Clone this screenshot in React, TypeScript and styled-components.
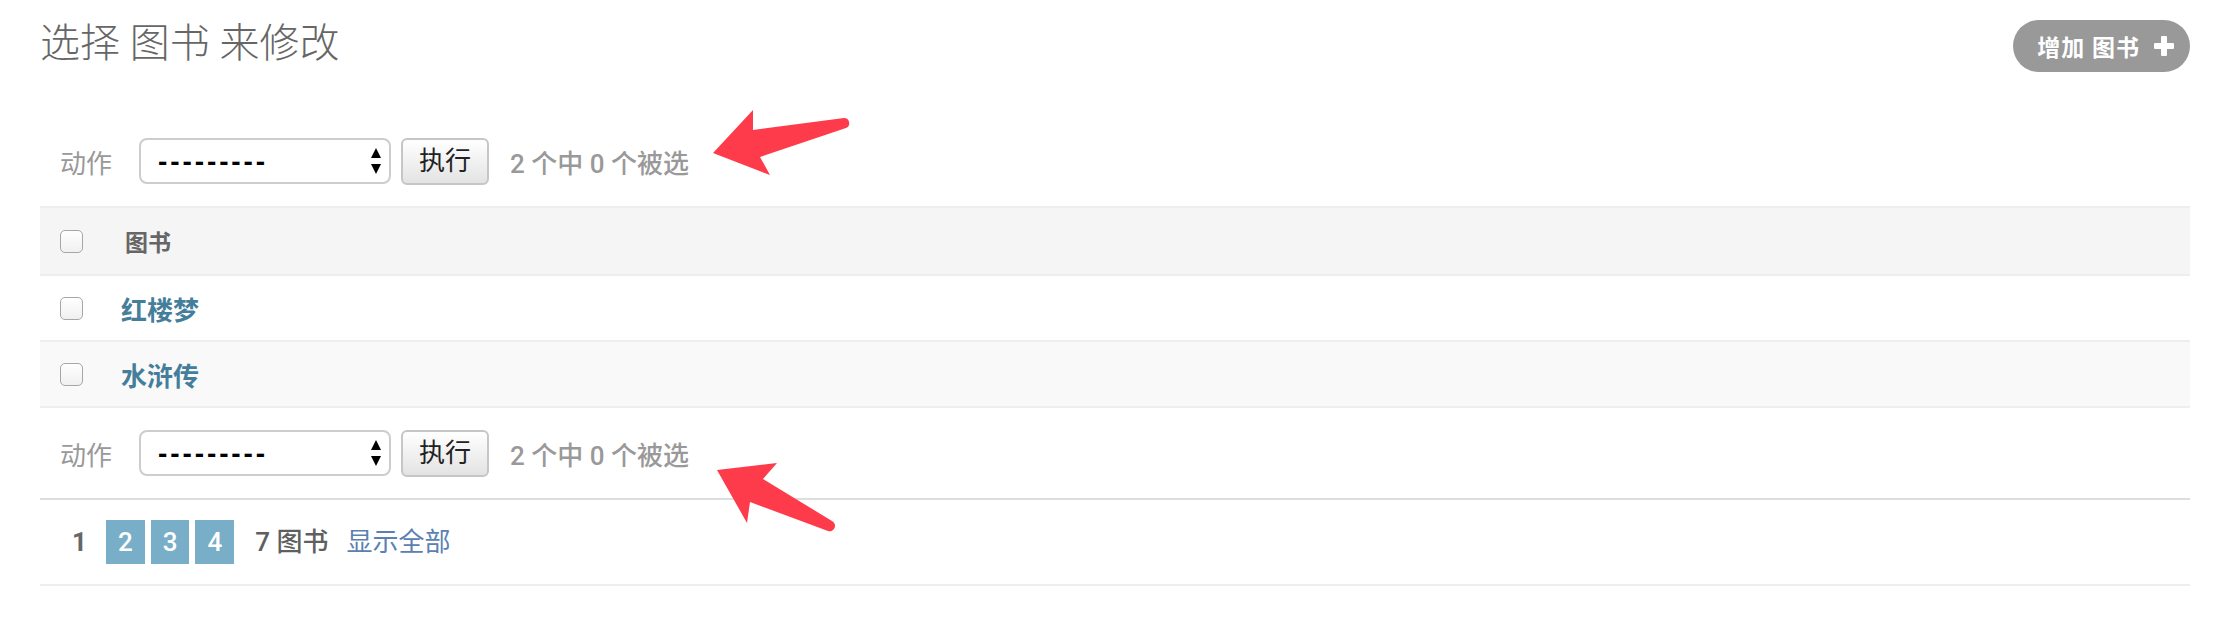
import React from "react";
import styled, { createGlobalStyle } from "styled-components";

const GlobalStyle = createGlobalStyle`
  html, body {
    margin: 0;
    padding: 0;
    background: #fff;
  }
  body {
    font-family: Roboto, "Noto Sans CJK SC", "DejaVu Sans", sans-serif;
  }
`;

const Page = styled.div`
  position: relative;
  width: 2236px;
  height: 620px;
  box-sizing: border-box;
  padding: 20px 46px 0 40px;
  overflow: hidden;
`;

const Header = styled.div`
  display: flex;
  justify-content: space-between;
  align-items: center;
  height: 52px;
  margin-bottom: 44px;
`;

const Title = styled.h1`
  margin: 0 0 4px;
  font-size: 40px;
  font-weight: 300;
  line-height: 48px;
  color: #666;
`;

const AddLink = styled.a`
  display: flex;
  align-items: center;
  gap: 14px;
  height: 52px;
  box-sizing: border-box;
  padding: 0 16px 0 24px;
  border-radius: 26px;
  background: #999;
  color: #fff;
  font-size: 23px;
  font-weight: 700;
  letter-spacing: 1px;
  text-decoration: none;
`;

const ActionBar = styled.div`
  display: flex;
  align-items: center;
  height: 90px;
  padding-left: 20px;
  font-size: 26px;
  color: #999;
`;

const ActionLabel = styled.span`
  color: #999;
`;

const SelectWrap = styled.div`
  position: relative;
  margin-left: 27px;
  width: 252px;
  height: 46px;
`;

const Select = styled.select`
  appearance: none;
  -webkit-appearance: none;
  width: 100%;
  height: 100%;
  box-sizing: border-box;
  margin: 0;
  padding: 0 0 0 17px;
  border: 2px solid #cdcdcd;
  border-radius: 8px;
  background: #fff;
  color: #000;
  font-family: "Liberation Sans", Arial, sans-serif;
  font-size: 28px;
  font-weight: 700;
  letter-spacing: 2.9px;
  outline: none;
`;

const SelectArrows = styled.svg`
  position: absolute;
  right: 10px;
  top: 10px;
  pointer-events: none;
`;

const GoButton = styled.button`
  margin-left: 10px;
  height: 47px;
  box-sizing: border-box;
  padding: 0 16px;
  border: 2px solid #c6c6c6;
  border-radius: 6px;
  background: linear-gradient(#ffffff, #e3e3e3);
  color: #222;
  font-family: inherit;
  font-size: 26px;
  line-height: 1;
`;

const Counter = styled.span`
  margin-left: 21px;
  color: #999;
  font-weight: 500;
`;

const HeadRow = styled.div`
  display: grid;
  grid-template-columns: 81px 1fr;
  align-items: center;
  height: 70px;
  box-sizing: border-box;
  border-top: 2px solid #eee;
  border-bottom: 2px solid #eee;
  background: #f5f5f5;
`;

const BodyRow = styled.div<{ $alt?: boolean }>`
  display: grid;
  grid-template-columns: 81px 1fr;
  align-items: center;
  height: 66px;
  box-sizing: border-box;
  border-bottom: 2px solid #eee;
  background: ${(p) => (p.$alt ? "#f9f9f9" : "#fff")};
`;

const CheckCell = styled.div`
  display: flex;
  align-items: center;
  padding-left: 20px;
`;

const Check = styled.input`
  appearance: none;
  -webkit-appearance: none;
  margin: 0;
  width: 23px;
  height: 23px;
  box-sizing: border-box;
  border: 1.5px solid #a6a6a6;
  border-radius: 5px;
  background: linear-gradient(#ffffff, #f0f0f0);
`;

const HeadLabel = styled.div`
  padding-left: 4px;
  font-size: 23px;
  font-weight: 700;
  color: #666;
`;

const RowLink = styled.a`
  font-size: 26px;
  font-weight: 700;
  color: #447e9b;
  text-decoration: none;
`;

const Paginator = styled.div`
  display: flex;
  align-items: center;
  padding: 20px 20px;
  border-top: 2px solid #ddd;
  border-bottom: 2px solid #eee;
  font-size: 26px;
  line-height: 44px;
  color: #666;
`;

const ThisPage = styled.span`
  padding: 0 12px;
  font-weight: 700;
  color: #666;
`;

const PageLink = styled.a<{ $gap: number; $end?: boolean }>`
  margin-left: ${(p) => p.$gap}px;
  margin-right: ${(p) => (p.$end ? 21 : 0)}px;
  padding: 0 12px;
  background: #79aec8;
  color: #fff;
  font-weight: 500;
  text-decoration: none;
`;

const ResultCount = styled.span`
  color: #5f5f5f;
  font-weight: 500;
`;

const ShowAll = styled.a`
  margin-left: 18px;
  color: #5b80b2;
  text-decoration: none;
`;

const Annotations = styled.svg`
  position: absolute;
  top: 0;
  left: 0;
  pointer-events: none;
`;

function Actions() {
  return (
    <ActionBar>
      <ActionLabel>动作</ActionLabel>
      <SelectWrap>
        <Select defaultValue="">
          <option value="">---------</option>
          <option value="delete_selected">删除所选的 图书</option>
        </Select>
        <SelectArrows width="10" height="26" viewBox="0 0 10 26">
          <path d="M0 10 L5 0 L10 10 Z" fill="#000" />
          <path d="M0 16 L10 16 L5 26 Z" fill="#000" />
        </SelectArrows>
      </SelectWrap>
      <GoButton type="button">执行</GoButton>
      <Counter>2 个中 0 个被选</Counter>
    </ActionBar>
  );
}

const books = ["红楼梦", "水浒传"];

export default function App() {
  return (
    <>
      <GlobalStyle />
      <Page>
        <Header>
          <Title>选择 图书 来修改</Title>
          <AddLink href="#">
            增加 图书
            <svg width="20" height="20" viewBox="0 0 20 20">
              <rect x="7" y="0" width="6" height="20" rx="1" fill="#fff" />
              <rect x="0" y="7" width="20" height="6" rx="1" fill="#fff" />
            </svg>
          </AddLink>
        </Header>

        <Actions />

        <HeadRow>
          <CheckCell>
            <Check type="checkbox" />
          </CheckCell>
          <HeadLabel>图书</HeadLabel>
        </HeadRow>
        {books.map((b, i) => (
          <BodyRow key={b} $alt={i % 2 === 1}>
            <CheckCell>
              <Check type="checkbox" />
            </CheckCell>
            <div>
              <RowLink href="#">{b}</RowLink>
            </div>
          </BodyRow>
        ))}

        <Actions />

        <Paginator>
          <ThisPage>1</ThisPage>
          <PageLink href="#" $gap={7}>2</PageLink>
          <PageLink href="#" $gap={6}>3</PageLink>
          <PageLink href="#" $gap={6} $end>4</PageLink>
          <ResultCount>7 图书</ResultCount>
          <ShowAll href="#">显示全部</ShowAll>
        </Paginator>

        <Annotations width="2236" height="620" viewBox="0 0 2236 620">
          <path
            d="M713 153 L753 110 L753 130 L844 118 A5.2 5.2 0 0 1 846 128 L760 157 L770 175 Z"
            fill="#fd3b4b"
          />
          <path
            d="M717 470 L777 463 L763 479 L832 521 A5.4 5.4 0 0 1 828 531 L750 502 L747 523 Z"
            fill="#fd3b4b"
          />
        </Annotations>
      </Page>
    </>
  );
}
